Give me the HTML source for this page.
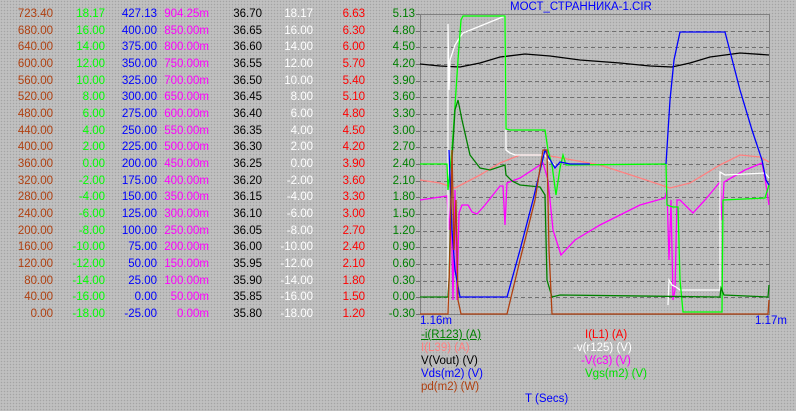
<!DOCTYPE html>
<html><head><meta charset="utf-8"><style>
html,body{margin:0;padding:0}
body{width:796px;height:411px;overflow:hidden;position:relative;background-color:#c0c0c0;
background-image:radial-gradient(circle,#a4a4a4 0.6px,transparent 0.9px);background-size:3px 3px;
font-family:"Liberation Sans",sans-serif;font-size:11.5px}
.t{position:absolute;line-height:12px;white-space:nowrap}
.r{text-align:right;width:60px}
</style></head><body>
<div id="c"></div>
<svg width="796" height="411" style="position:absolute;left:0;top:0" id="s">
<g id="grid"></g>
<rect x="420.5" y="14.5" width="349" height="300" fill="none" stroke="#808080"/>
<g fill="none" stroke-width="1.3">
<polyline stroke="#ff8080" points="420,180 440,183 455,188 480,175 500,163 520,155 545,155 600,165 640,178 670,188 690,183 720,165 740,155 760,157 769,162"/>
<polyline stroke="#000" points="420,64 440,66 460,67 480,63 500,57 525,54 550,56 580,60 620,63 650,66 672,67 690,63 710,57 740,53 769,55"/>
<polyline stroke="#ff00ff" points="420,200 447,196 449,230 451,200 453,300 455,190 457,300 459,213 462,205 468,205 472,212 477,214 485,205 500,186 503,186 505,225 507,183 520,178 543,163 548,180 553,230 561,255 575,240 600,225 640,205 665,198 667,190 669,260 671,200 673,300 675,290 677,200 680,200 685,205 693,213 705,200 720,182 722,220 724,182 745,170 762,163 765,178 769,205"/>
<polyline stroke="#fff" points="448,314 448,24 449,90 450,60 455,45 460,37 463,33 505,16 506,150 510,153 515,155 545,155 548,160 555,165"/>
<polyline stroke="#fff" points="668,305 669,280 672,285 676,287 680,290 720,290 720,172 725,175 765,173 769,178"/>
<polyline stroke="#00ff00" points="420,164 447,164 448,190 452,150 455,106 458,60 461,20 463,16 505,16 506,129 510,130 545,130 548,150 552,165 556,195 560,168 563,155 566,165 666,164 667,205 673,207 678,207 680,280 683,312 722,312 723,200 765,198 769,185"/>
<polyline stroke="#008000" points="420,297 448,297 449,280 452,160 455,110 458,100 462,120 470,155 480,168 490,170 505,165 506,175 512,181 520,185 540,187 545,195 547,280 552,297 560,295 720,297 721,288 724,295 768,297 769,285"/>
<polyline stroke="#0000ff" points="449,150 452,230 455,270 460,297 507,297 520,250 533,200 545,150 549,158 555,168 560,162 570,164 590,164"/>
<polyline stroke="#0000ff" points="666,164 670,100 674,60 680,32 725,32 740,90 752,130 762,160 766,180 769,185"/>
<polyline stroke="#b04010" points="420,314 448,314 450,250 452,150 454,250 456,200 458,300 461,314 507,314 520,260 535,200 543,150 547,150 549,250 552,314 768,314 769,300"/>
</g>
</svg>
<div class="t" style="left:510px;top:1px;color:#0000ff">МОСТ_СТРАННИКА-1.CIR</div>
<div class="t" style="left:420px;top:315px;color:#0000ff">1.16m</div>
<div class="t" style="left:755px;top:315px;color:#0000ff">1.17m</div>
<div class="t" style="left:421px;top:329px;color:#008000;text-decoration:underline">-i(R123) (A)</div>
<div class="t" style="left:585px;top:329px;color:#ff0000">I(L1) (A)</div>
<div class="t" style="left:421px;top:342px;color:#ff8080">I(L39) (A)</div>
<div class="t" style="left:573px;top:342px;color:#fff">-v(r125) (V)</div>
<div class="t" style="left:421px;top:355px;color:#000">V(Vout) (V)</div>
<div class="t" style="left:581px;top:355px;color:#ff00ff">-V(c3) (V)</div>
<div class="t" style="left:421px;top:368px;color:#0000ff">Vds(m2) (V)</div>
<div class="t" style="left:585px;top:368px;color:#00e000">Vgs(m2) (V)</div>
<div class="t" style="left:421px;top:381px;color:#b04010">pd(m2) (W)</div>
<div class="t" style="left:525px;top:393px;color:#0000ff">T (Secs)</div>
<script>
var cols=[
[53,"#b04010",["723.40","680.00","640.00","600.00","560.00","520.00","480.00","440.00","400.00","360.00","320.00","280.00","240.00","200.00","160.00","120.00","80.00","40.00","0.00"]],
[105,"#00ff00",["18.17","16.00","14.00","12.00","10.00","8.00","6.00","4.00","2.00","0.00","-2.00","-4.00","-6.00","-8.00","-10.00","-12.00","-14.00","-16.00","-18.00"]],
[157,"#0000ff",["427.13","400.00","375.00","350.00","325.00","300.00","275.00","250.00","225.00","200.00","175.00","150.00","125.00","100.00","75.00","50.00","25.00","0.00","-25.00"]],
[209,"#ff00ff",["904.25m","850.00m","800.00m","750.00m","700.00m","650.00m","600.00m","550.00m","500.00m","450.00m","400.00m","350.00m","300.00m","250.00m","200.00m","150.00m","100.00m","50.00m","0.00m"]],
[262,"#000",["36.70","36.65","36.60","36.55","36.50","36.45","36.40","36.35","36.30","36.25","36.20","36.15","36.10","36.05","36.00","35.95","35.90","35.85","35.80"]],
[313,"#fff",["18.17","16.00","14.00","12.00","10.00","8.00","6.00","4.00","2.00","0.00","-2.00","-4.00","-6.00","-8.00","-10.00","-12.00","-14.00","-16.00","-18.00"]],
[365,"#ff0000",["6.63","6.30","6.00","5.70","5.40","5.10","4.80","4.50","4.20","3.90","3.60","3.30","3.00","2.70","2.40","2.10","1.80","1.50","1.20"]],
[415,"#008000",["5.13","4.80","4.50","4.20","3.90","3.60","3.30","3.00","2.70","2.40","2.10","1.80","1.50","1.20","0.90","0.60","0.30","0.00","-0.30"]]];
var h="";
cols.forEach(function(c){c[2].forEach(function(v,i){var y=14+i*16.67;
h+='<div class="t r" style="left:'+(c[0]-60)+'px;top:'+(y-6).toFixed(1)+'px;color:'+c[1]+'">'+v+'</div>';});});
document.getElementById('c').innerHTML=h;
var g="";
for(var i=1;i<18;i++){var y=Math.round(14+i*16.67)+0.5;
g+='<line x1="416" y1="'+y+'" x2="769" y2="'+y+'" stroke="#707070" stroke-dasharray="4,3"/>';}
g+='<line x1="416" y1="14.5" x2="420" y2="14.5" stroke="#707070"/><line x1="416" y1="314.5" x2="420" y2="314.5" stroke="#707070"/>';
document.getElementById('grid').innerHTML=g;
</script>
</body></html>
